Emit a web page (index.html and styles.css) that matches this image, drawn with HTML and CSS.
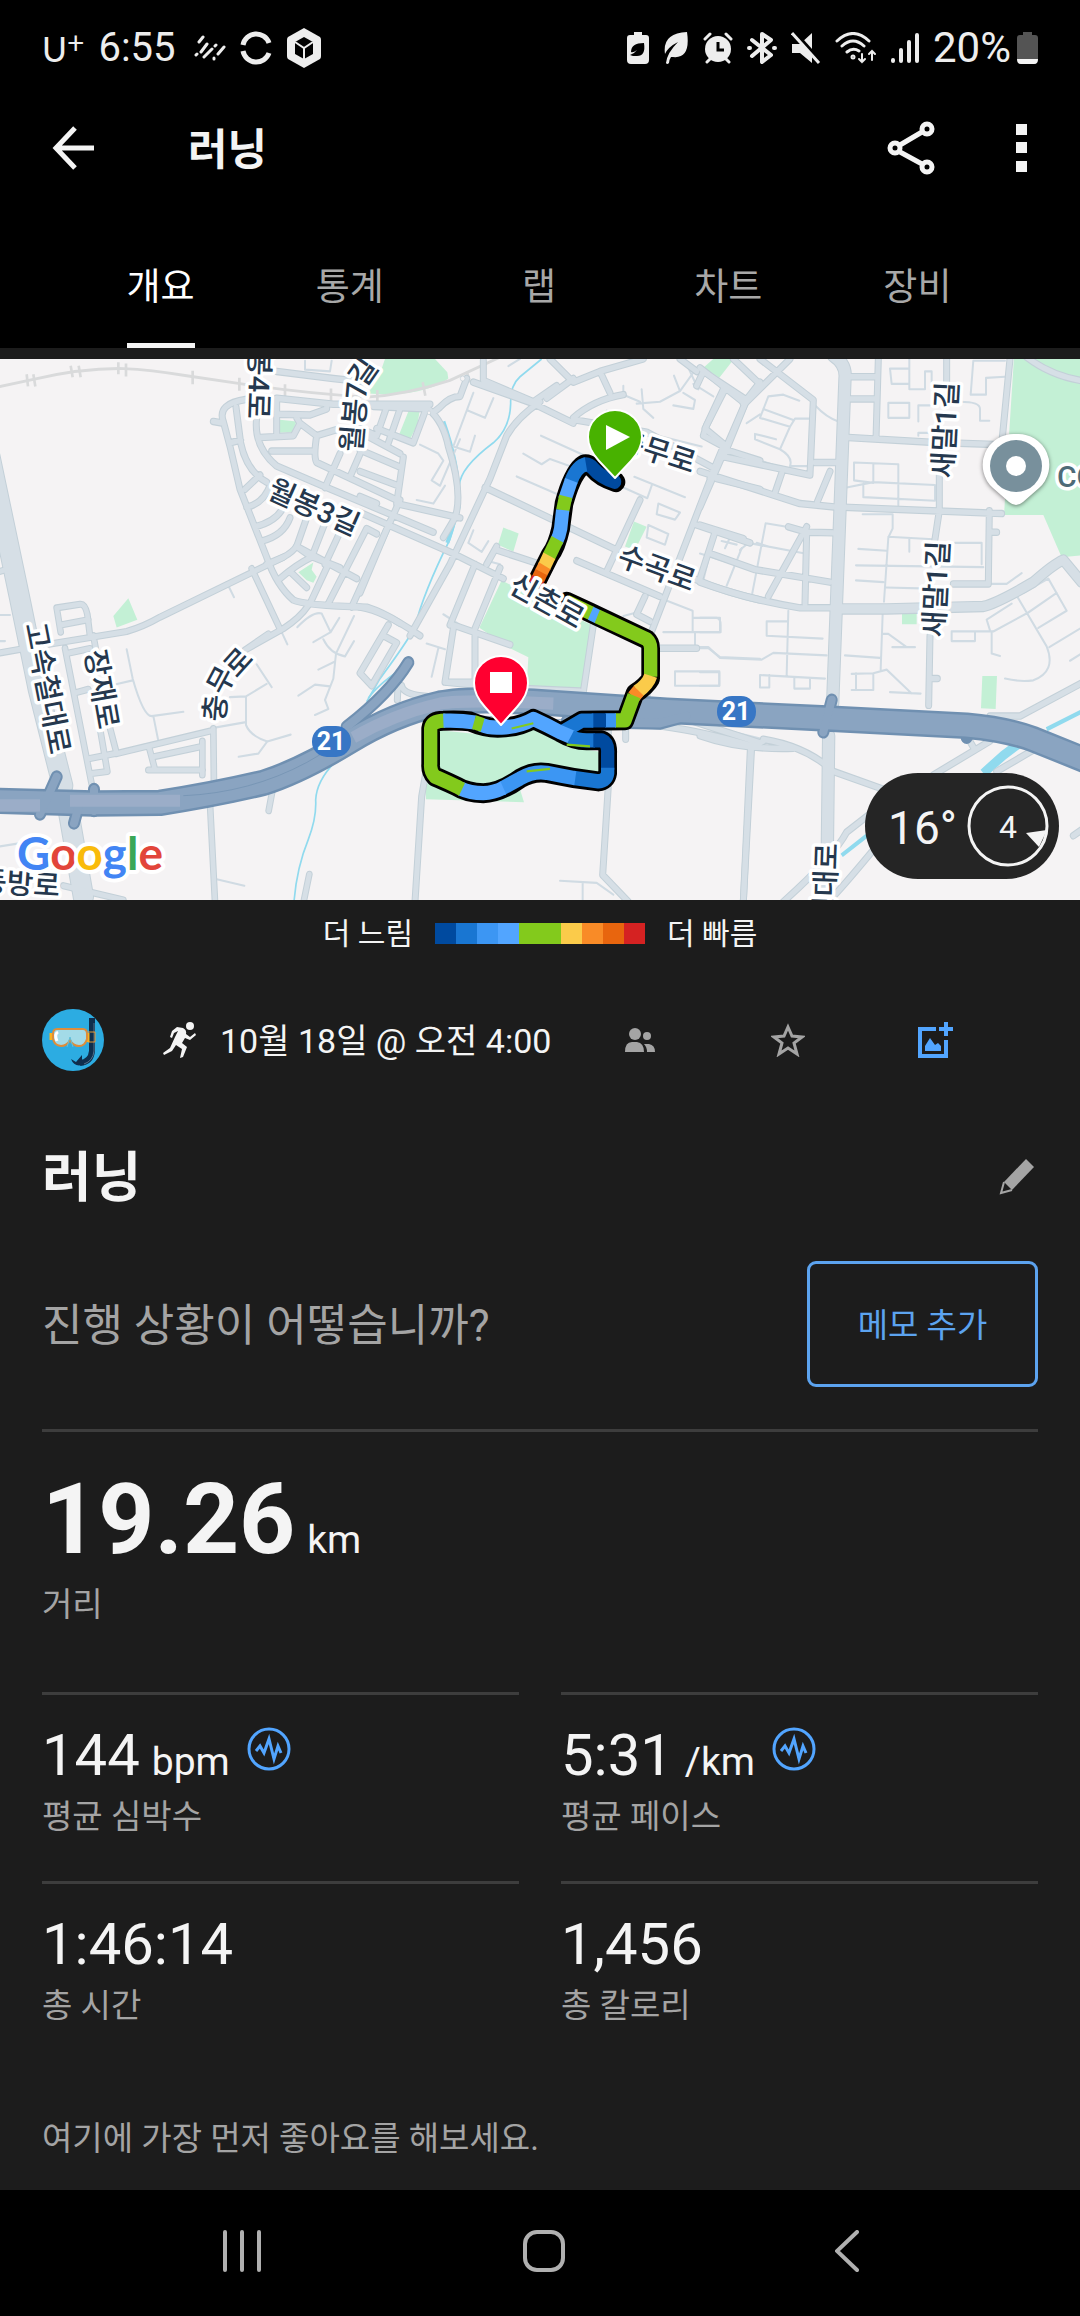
FILE: index.html
```html
<!DOCTYPE html>
<html lang="ko">
<head>
  <meta charset="UTF-8">
  <meta name="viewport" content="width=device-width, initial-scale=1.0">
  <title>러닝</title>
  <link rel="stylesheet" href="styles.css">
</head>
<body>
  <div class="status-bar">
    <div class="status-left">
      <span class="carrier">U<sup>+</sup></span>
      <span class="clock">6:55</span>
      <svg class="st-icon" width="32" height="28" viewBox="0 0 32 28" stroke="#ededed" stroke-width="3" stroke-linecap="round">
        <path d="M5 8L9 3M7 18L13 10M2 21L3 20M10 23L18 15M21 12L22 11M20 25L20 24M24 20L30 13"/>
      </svg>
      <svg class="st-icon" width="32" height="34" viewBox="0 0 32 34" fill="none" stroke="#ededed" stroke-width="5">
        <path d="M3 14A13.500 13.500 0 0 1 29 12M3 20A13.500 13.500 0 0 0 29 22"/>
      </svg>
      <svg class="st-icon" width="36" height="40" viewBox="0 0 36 40">
        <path d="M18 0L34 9Q35 10 35 12V28Q35 30 34 31L18 40L2 31Q1 30 1 28V12Q1 10 2 9Z" fill="#ededed"/>
        <path d="M18 9L27 14V26L18 31L9 26V14Z" fill="#000"/>
        <path d="M9 14L18 20L27 14M18 20V31" stroke="#ededed" stroke-width="2" fill="none"/>
      </svg>
    </div>
    <div class="status-right">
      <svg width="22" height="32" viewBox="0 0 22 32">
        <path d="M7 0H15V3H19Q22 3 22 6V28Q22 32 18 32H4Q0 32 0 28V6Q0 3 3 3H7Z" fill="#ededed"/>
        <path d="M17 11Q19 24 10 24H6L3 23Q8 21 10 18Q6 21 4 20Q4 11 17 11Z" fill="#000"/>
      </svg>
      <svg width="26" height="34" viewBox="0 0 26 34">
        <path d="M24 1Q28 28 10 26H8Q6 29 6 32Q4 34 3 32Q4 22 15 11Q5 16 2 23Q-1 2 24 1Z" fill="#ededed"/>
      </svg>
      <svg width="30" height="32" viewBox="0 0 30 32">
        <circle cx="15" cy="17" r="13" fill="#ededed"/>
        <path d="M2 7L7 2M28 7L23 2M4 30L7 27M26 30L23 27" stroke="#ededed" stroke-width="3" stroke-linecap="round"/>
        <path d="M15 10V18H21" stroke="#000" stroke-width="3" fill="none"/>
      </svg>
      <svg width="30" height="34" viewBox="0 0 30 34" fill="none" stroke="#ededed" stroke-width="4" stroke-linejoin="round" stroke-linecap="round">
        <path d="M5 9L24 24L15 31V3L24 9L5 25M2 17H3M27 17H28"/>
      </svg>
      <svg width="30" height="32" viewBox="0 0 30 32">
        <path d="M1 12H9L21 1V31L9 21H1Z" fill="#ededed"/>
        <path d="M4 1L31 31" stroke="#000" stroke-width="4"/>
        <path d="M1 1L28 31" stroke="#ededed" stroke-width="3"/>
      </svg>
      <svg width="42" height="32" viewBox="0 0 42 32" fill="none" stroke="#ededed" stroke-width="3" stroke-linecap="round">
        <path d="M2 9Q18 -6 34 9M7 14Q18 4 29 14M12 20Q18 15 24 19"/>
        <circle cx="18" cy="25" r="1"/>
        <path d="M27 22V30M24 27L27 30L30 27M37 28V19M34 22L37 19L40 22" stroke-width="2"/>
      </svg>
      <svg width="28" height="32" viewBox="0 0 28 32" stroke="#ededed" stroke-width="4" stroke-linecap="round">
        <path d="M2 28V29M10 18V29M18 10V29M26 3V29"/>
      </svg>
      <span class="percent">20%</span>
      <svg width="21" height="32" viewBox="0 0 21 32">
        <path d="M6 0H15V3H18Q21 3 21 6V28Q21 32 17 32H4Q0 32 0 28V6Q0 3 3 3H6Z" fill="#545454"/>
        <path d="M0 27H21Q21 32 17 32H4Q0 32 0 27Z" fill="#f4f4f4"/>
      </svg>
    </div>
  </div>

  <header class="app-bar">
    <button class="icon-btn" aria-label="뒤로">
      <svg width="42" height="44" viewBox="0 0 42 44" fill="none" stroke="#f4f4f4" stroke-width="5">
        <path d="M42 22H4M23 2L4 22L23 42"/>
      </svg>
    </button>
    <h1>러닝</h1>
    <button class="icon-btn share" aria-label="공유">
      <svg width="48" height="54" viewBox="0 0 48 54" fill="none" stroke="#f4f4f4" stroke-width="5">
        <path d="M13 24L35 11M13 31L35 43"/>
        <circle cx="8" cy="27" r="5"/><circle cx="40" cy="8" r="5"/><circle cx="40" cy="46" r="5"/>
      </svg>
    </button>
    <button class="icon-btn" aria-label="더보기">
      <svg width="12" height="48" viewBox="0 0 12 48" fill="#f4f4f4">
        <path d="M0 0H11V11H0ZM0 18H11V29H0ZM0 37H11V48H0Z"/>
      </svg>
    </button>
  </header>

  <nav class="tabs">
    <button class="tab active"><span>개요</span></button>
    <button class="tab"><span>통계</span></button>
    <button class="tab"><span>랩</span></button>
    <button class="tab"><span>차트</span></button>
    <button class="tab"><span>장비</span></button>
  </nav>

  <main>
    <section class="map">
      <svg class="map-canvas" viewBox="0 0 1080 541">
        <g transform="translate(0 -9) scale(.33333 .35714)">
          <!-- parks -->
          <g class="park">
            <path d="M840 195L890 200L875 230L835 232ZM340 745L385 695L412 755L350 777ZM895 622L940 595L935 615L950 635L940 652L920 645Z"/>
            <path transform="translate(1080 0)" d="M75 25H225L262 62L265 80Q215 118 90 125L25 122L50 80L62 60ZM148 165L180 165L172 210L150 250L118 235ZM430 497L476 514L460 565L414 545ZM822 480L860 495L825 560L795 550ZM425 645L540 700L695 770L660 962L500 948L505 860L450 835L358 778ZM195 1210L330 1100L470 1200L492 1266L198 1258ZM240 1065L400 1080L520 1050L620 1110L720 1125L720 1185L540 1165L400 1215L330 1212L240 1175ZM1030 50L1060 25H1122L1078 78Z"/>
            <path transform="translate(2100 0)" d="M942 20H1145V575L1085 580L1030 462H912ZM606 735L650 735L650 768L606 768ZM847 913H891L887 1005L843 1003Z"/>
          </g>
          <!-- streams -->
          <g class="water">
            <path d="M1200 895Q1130 940 1105 975M1020 1140Q950 1200 947 1260Q950 1310 925 1370Q890 1450 882 1545"/>
            <path transform="translate(1080 0)" d="M545 25L480 75Q450 100 452 150Q450 220 400 260Q300 330 298 380Q300 450 270 530Q190 680 165 775Q140 820 60 920L20 985"/>
            <path class="wide" transform="translate(1080 0)" d="M250 200Q300 330 296 440L262 540"/>
            <path class="wide" transform="translate(2100 0)" d="M1150 1010L1040 1062M500 1360L425 1415"/>
            <path class="broad" transform="translate(2100 0)" d="M960 1100L910 1135L850 1185"/>
          </g>
          <!-- railway -->
          <path class="rail" d="M-10 104L100 82Q250 50 370 52Q450 55 560 72L720 94Q900 120 1100 132Q1220 125 1350 85L1500 20"/>
          <path class="rail" d="M80 68L84 102M100 68L106 102M212 44L218 76M236 44L242 76M355 34V68M378 38V74M578 58V96M718 78V114M855 96V130M993 108V142M1132 112V146M1268 90L1276 128M1400 60L1410 90"/>

          <!-- lanes -->
          <g class="lane">
            <path d="M0 742H30M0 815H15M380 838L398 920Q430 1025 455 1025L550 1013M348 936L398 925M460 1025L474 1090M680 650L702 692M770 880L815 944M800 935L738 970V1050Q750 1080 802 1096L872 1077M690 972L738 970M640 1058L738 1042M802 1096L775 1130L716 1139M845 790L862 824M892 776Q940 730 965 738L992 790L940 818M1018 750L992 790M970 810Q990 850 1035 858L1062 815M1062 745L1008 850L1000 920L975 980L985 1005L945 1022M1005 872L955 895M990 942L945 937L895 968M915 30L915 55L990 60L995 30M650 1482L733 1500M0 1390L80 1378"/>
            <path transform="translate(1080 0)" d="M340 120L280 270L330 285L345 240M400 135L375 190L325 170M215 365L240 380L300 250M170 420L220 430L255 380M180 265L235 290L250 310L215 365M543 240L720 315M490 290L545 320L570 305L660 335M470 354L620 415M823 355L975 412M875 380L862 415L790 385M895 430L960 455L945 475L890 460ZM865 490L925 515L915 545L860 525ZM340 505L325 540L365 565L385 535M380 590L420 600M945 900H1078V940H945ZM998 750H1070Q1082 752 1082 770V790H998ZM915 700L998 730V790M790 745L830 735M910 790H1005V835M1005 835H1045L1080 860L1200 865M600 1486L710 1492L760 1525M668 1492V1540M790 100V125L840 145M845 110L850 165L880 190M740 170L790 200M830 150L900 145L960 115L942 72M1010 50L960 115M980 40L1015 110M970 120L1005 140L1000 165L940 155M1000 95L1060 130M850 230L1025 270M200 822L255 838M235 835L215 915M250 740L300 770M1015 490L1150 530M1085 535L1130 545M1110 525L1095 555M1165 540L1140 560M445 45L480 25M1200 180L1160 205"/>
            <path transform="translate(2100 0)" d="M298 142L250 125L205 130L180 190L270 215L240 278L165 250V235L228 250M270 215L285 192H330M190 165L278 195M240 278Q280 300 270 325H325M135 295L245 330M170 540L205 550M345 155Q380 190 415 200M570 52H628V95H575ZM628 25V110H675V60H695V110M565 148H628V190H565ZM655 200V155H690M780 145Q840 145 840 165V198H868M820 30L812 125H858V78L915 75M820 30H915M655 240V232H690M462 315L595 320V435M462 315V365L520 372V320M440 385L520 370L705 378V422L490 412V375M488 460H578V500L565 525L552 705M475 557L560 562M468 603L850 608M468 645L550 650M558 665L690 668M565 523L700 530M628 528V565M765 540H845V600M197 485L260 495M45 510L10 645M0 570L165 618L310 640M197 485L155 690M125 555L80 660M345 505L400 512M145 540L315 570M265 730L260 910M0 750H60V790H0M0 832H25L60 862L185 867L220 848L380 855M262 760H200V800L368 808M0 902H58V940H0M208 910V945H180V910L375 920M283 918V948H330V920M548 740L542 895M435 855L540 862M455 907L520 905V952H455M468 905V952M520 905L560 895L635 962M570 958L662 962M548 795L565 795L620 832M577 832H645M755 788H825V815H755ZM825 788H880L985 735L1070 680M945 680L1040 830Q1070 900 1000 925Q960 930 915 920M870 785L860 755L935 710M970 680L1045 640L1100 730L1015 778M1048 832L1140 780M875 790V850L900 857M1110 870L1145 850M875 655H920L965 625M0 1050Q60 1060 190 1090"/>
          </g>

          <!-- streets: the casing pass first, the fill pass over it -->
          <defs>
            <g id="streets">
              <path class="s4" d="M-30 300L58 690L115 950L188 1220M205 1290L250 1530"/>
              <path class="s2" d="M0 848L160 822L380 788Q430 775 480 748L850 580Q880 565 890 548M150 822L80 840M0 620L28 612M755 612L842 785M350 1130L640 1065M350 1130L325 1040M280 800L288 840M270 800L262 740Q255 710 240 712L170 722L182 790M182 770L265 755M195 835L275 1215M200 850L270 836M225 960L265 950M262 1145L345 1130M300 1060L322 1180L275 1186M448 1115L465 1175M445 1176H608M607 1095V1190M455 1140L605 1110M630 1270L645 1545M818 1230L806 1290M928 1468L912 1540M640 1060L642 1230M190 1500L370 1540M735 840L850 780Q900 750 925 715M735 840L805 795"/>
              <path class="s3" d="M670 200Q650 150 740 138M670 200L690 270L720 390L800 580Q830 660 880 700Q910 715 1100 720Q1150 735 1200 765M770 190Q760 270 830 325L980 385L1300 510M800 600L850 580M708 160L722 260Q740 340 800 370M830 60L1000 80L1100 90M830 135L1000 152H1290M830 135V240M640 200L670 205M690 260L722 252M735 390L780 350M740 440Q790 430 810 380M765 495Q830 480 850 440M785 535Q850 520 870 470M838 180L930 182L980 165V152M780 245L880 240L900 205L890 190M900 205L950 240L1020 220M950 240Q940 300 950 315L1190 420M815 283H940M975 385L1020 290M1050 355L1090 270M840 640Q890 600 935 580L985 460M870 620L920 665M935 580L890 550L920 470M975 600L1020 510M985 710L1100 500L1130 515M930 710L985 600M1055 720L1200 420M890 550L1070 640M940 580L1020 610M1160 160L1130 240L1080 220M1165 770L1080 905L1115 940L1190 820L1150 800M1280 160L1240 260L1130 220M1200 165L1165 260"/>
              <path class="s3" transform="translate(1080 0)" d="M40 158L205 165Q250 200 265 270Q310 400 285 470L250 525M340 90L520 150L640 205M320 80L300 130Q270 130 240 160L220 175M370 30V85L520 145L590 100M540 145Q470 190 440 240L390 360L270 600L150 800M570 25L640 90L720 60L850 25M640 80L560 135M720 60L750 120M640 190Q700 140 790 125M640 195L860 230L1060 330M375 385L770 560M130 300L110 430L300 470M0 230L120 290M0 280L125 330M0 340L115 380M0 455L280 570L430 640M0 720Q70 730 180 800M90 480L0 680M345 600L270 770M280 770L450 825M345 790V930M280 780L255 930H430M410 550L380 600M410 560L540 600M650 590L900 690M840 420L740 620M0 410L50 430M1060 340L870 800M700 770L668 970M890 835H1010M855 690L830 740L870 760M865 930L860 980M1010 100L1030 60L1160 140M1010 60L960 25M1090 110L1040 210L1030 240L1090 270L1050 360M1100 280L1200 310M1160 140L1090 300M1150 150L1200 90M1070 360L1200 390M1010 490L1170 540M1000 640Q1100 680 1200 700M420 610L345 780M125 940Q130 965 200 970M115 920L112 980M255 930L420 945L660 955M200 1170L185 1250L165 1545M745 1060V1220L728 1470L805 1545M797 1050V1090M1172 1100L1150 1545M1000 1040L1200 1100M870 1050Q1000 1060 1180 1110"/>
              <path class="s3" transform="translate(2100 0)" d="M0 50L135 150L70 290L0 440M75 110L15 220L80 270M135 150L270 25M100 25L185 100M180 25L340 140L330 350L75 300M345 315H420M245 345L225 400M0 340L300 430L410 440M390 340L352 425M450 75H525M450 137H525M535 25L528 250M445 245L690 258L905 265M740 25V90M930 25L905 265M430 440L905 458M868 450L865 655H760M868 510H890M718 350V450L700 560M690 800L686 995M690 920H712M320 495L205 690M325 510L400 512M320 510L315 710M0 650Q150 700 300 722H550M0 490L130 528M265 495L320 510M30 570L165 615L390 650M45 510L0 640M980 20Q1050 70 1140 85M155 1110L130 1545M0 1080Q120 1120 280 1115M190 1095L160 1110M190 1090Q320 1110 400 1180L550 1230M550 1270L440 1350Q400 1420 250 1545M520 1400Q440 1490 400 1530M870 1035V1095L700 1190M800 1080L825 1120M870 1025H960L1150 930M1000 1120L890 1180M1000 1110Q1070 1110 1150 1170M1120 1360L1150 1340"/>
              <path class="s35" transform="translate(2100 0)" d="M420 725H560L850 718Q890 710 1000 650Q1060 600 1090 588L1145 650"/>
              <path class="s38" transform="translate(2100 0)" d="M400 15Q440 40 435 80L398 990M386 1080L382 1400L370 1545"/>
            </g>
          </defs>
          <use href="#streets" class="casing"/>
          <use href="#streets" class="fill"/>
          <g transform="translate(1080 0)" class="circle">
            <circle cx="207" cy="176" r="5"/><circle cx="308" cy="80" r="7"/>
          </g>

          <!-- national road 21 -->
          <g class="highway edge">
            <path class="ramp" d="M1225 875Q1170 960 1040 1055"/>
            <path d="M-20 1262L280 1270L480 1268Q640 1245 790 1212Q900 1180 1050 1095Q1180 1020 1320 990Q1400 975 1600 985L2000 1010L2480 1032L2900 1052Q3020 1062 3100 1090L3260 1150"/>
            <path class="ramp" d="M170 1195L120 1300M282 1230V1290M240 1265L222 1325M2495 980L2470 1070M1700 1040L1980 1045L2060 1025M2900 1060V1085"/>
          </g>
          <g class="highway">
            <path class="ramp" d="M1225 875Q1170 960 1040 1055"/>
            <path d="M-20 1262L280 1270L480 1268Q640 1245 790 1212Q900 1180 1050 1095Q1180 1020 1320 990Q1400 975 1600 985L2000 1010L2480 1032L2900 1052Q3020 1062 3100 1090L3260 1150"/>
            <path class="ramp" d="M170 1195L120 1300M282 1230V1290M240 1265L222 1325M2495 980L2470 1070M1700 1040L1980 1045L2060 1025"/>
            <path class="light" d="M-20 1275H120M210 1262H540M1060 1085Q1180 1020 1320 990Q1400 978 1660 990"/>
            <path class="seam" d="M550 1248Q750 1240 920 1155L1040 1090M1440 1025L1800 1040"/>
          </g>

          <!-- recorded track, coloured by pace -->
          <g class="track" transform="translate(1080 0)">
            <g class="outline">
              <path d="M768 370Q720 355 700 332Q680 312 665 325Q635 350 612 430L602 500Q590 550 570 575L535 640"/>
              <path d="M620 705L690 735L860 810Q872 820 872 835V920Q860 940 825 962L795 1037L665 1038L610 1068"/>
              <path d="M425 1057Q480 1055 520 1033Q560 1050 600 1070Q640 1092 680 1093H725Q745 1100 743 1130V1185Q740 1205 715 1208Q640 1200 560 1184Q520 1178 480 1200Q420 1240 370 1241Q320 1240 290 1222Q240 1200 225 1195Q210 1180 212 1160V1060Q215 1038 250 1038Q300 1036 330 1040Q380 1060 425 1057Z"/>
            </g>
            <path stroke="#004a9f" stroke-linecap="round" d="M764 369Q720 355 700 332Q690 320 676 320"/>
            <path stroke="#1976d2" d="M678 320Q650 325 632 370"/>
            <path stroke="#52a5ff" d="M634 365L614 420"/>
            <path stroke="#83ca1c" d="M617 410L608 450"/>
            <path stroke="#52a5ff" d="M608 448L602 500Q598 520 590 535"/>
            <path stroke="#83ca1c" d="M592 530L566 580"/>
            <path stroke="#fbcb4a" d="M568 576L552 608"/>
            <path stroke="#f98b27" d="M554 604L543 624"/>
            <path stroke="#e8650e" d="M544 622L534 642"/>
            <path stroke="#d52222" d="M535 640L525 658"/>
            <path stroke="#83ca1c" d="M620 705L695 738"/>
            <path stroke="#52a5ff" d="M692 737L714 747"/>
            <path stroke="#83ca1c" d="M712 746L860 810Q872 820 872 835V915"/>
            <path stroke="#fbcb4a" d="M872 912Q865 935 832 957"/>
            <path stroke="#f98b27" d="M836 954L820 972"/>
            <path stroke="#83ca1c" d="M822 968L795 1037H765"/>
            <path stroke="#3c96f3" d="M768 1037H735"/>
            <path stroke="#004a9f" d="M738 1037H695"/>
            <path stroke="#1976d2" d="M700 1038H665L610 1068"/>
            <path stroke="#52a5ff" d="M362 1049Q390 1060 425 1057Q480 1055 520 1033Q560 1050 600 1070L640 1086"/>
            <path stroke="#1976d2" d="M632 1083Q650 1093 680 1093H705"/>
            <path stroke="#004a9f" d="M700 1093H725Q745 1100 743 1130V1175"/>
            <path stroke="#1976d2" d="M743 1170V1185Q740 1205 715 1208L640 1198"/>
            <path stroke="#3c96f3" d="M646 1199Q600 1192 560 1184Q520 1178 480 1200L425 1228"/>
            <path stroke="#52a5ff" d="M430 1226Q400 1240 370 1241Q330 1240 302 1228"/>
            <path stroke="#83ca1c" d="M306 1230L290 1222Q240 1200 225 1195Q210 1180 212 1160V1060Q215 1038 256 1038"/>
            <path stroke="#52a5ff" d="M250 1038Q300 1036 345 1043"/>
            <path stroke="#83ca1c" d="M342 1042L368 1050"/>
            <path stroke="#83ca1c" class="thin" d="M455 1060L520 1045M500 1180L570 1173M620 1105L690 1110"/>
          </g>
        </g>

        <!-- street names -->
        <g class="names">
          <text transform="translate(48 329) rotate(79)" dy=".36em">고속철대로</text>
          <text transform="translate(102 330) rotate(80)" dy=".36em">장재로</text>
          <text transform="translate(215 349) rotate(-85)" dy=".36em">충</text>
          <text transform="translate(221 321) rotate(-62)" dy=".36em">무</text>
          <text transform="translate(238 303) rotate(-48)" dy=".36em">로</text>
          <text transform="translate(314 148) rotate(24)" dy=".36em">월봉3길</text>
          <text transform="translate(258 60) rotate(92)" dy=".36em" class="end">월봉4로</text>
          <text transform="translate(354 58) rotate(-85)" dy=".36em">월봉7</text>
          <text transform="translate(363 13) rotate(-55)" dy=".36em">길</text>
          <text transform="translate(657 92) rotate(18)" dy=".36em">충무로</text>
          <text transform="translate(657 209) rotate(20)" dy=".36em">수곡로</text>
          <text transform="translate(547 242) rotate(29)" dy=".36em">신촌로</text>
          <text transform="translate(945 71) rotate(-87)" dy=".36em">새말1길</text>
          <text transform="translate(936 230) rotate(-87)" dy=".36em">새말1길</text>
          <text transform="translate(827 484) rotate(-88)" dy=".36em" class="end">번영대로</text>
          <text transform="translate(60 527) rotate(4)" dy=".36em" class="end">동방로</text>
          <text x="1057" y="128" class="place">CG</text>
        </g>

        <g class="shield">
          <rect x="312" y="367" width="39" height="31" rx="15"/><text x="331" y="391">21</text>
          <rect x="717" y="337" width="39" height="31" rx="15"/><text x="736" y="361">21</text>
        </g>

        <text class="google" x="17" y="511"><tspan fill="#4285f4">G</tspan><tspan fill="#e2453a">o</tspan><tspan fill="#f9bb0b">o</tspan><tspan fill="#4285f4">g</tspan><tspan fill="#3aa757">l</tspan><tspan fill="#e2453a">e</tspan></text>

        <!-- place pin -->
        <path class="place-pin" d="M1016 75A31 31 0 0 1 1039 129L1023 143Q1016 149 1009 143L993 129A31 31 0 0 1 1016 75Z"/>
        <circle cx="1016" cy="107" r="26" fill="#78909c"/>
        <circle cx="1016" cy="107" r="10" fill="#fff"/>
        <!-- start and stop pins -->
        <path class="pin" fill="#48b200" d="M615 51A27 27 0 0 1 642 78Q642 90 631 102L615 119L599 102Q588 90 588 78A27 27 0 0 1 615 51Z"/>
        <path d="M606 66V91L630 78Z" fill="#fff"/>
        <path class="pin" fill="#ff0030" d="M501 297A27 27 0 0 1 528 324Q528 336 517 348L501 366L485 348Q474 336 474 324A27 27 0 0 1 501 297Z"/>
        <path d="M490 313H512V334H490Z" fill="#fff"/>
      </svg>
      <div class="weather">
        <span>16°</span>
        <svg width="82" height="82" viewBox="0 0 82 82">
          <circle cx="41" cy="41" r="39" fill="none" stroke="#f4f4f4" stroke-width="3"/>
          <path d="M59 48L80 45L72 62Z" fill="#f4f4f4"/>
          <text x="41" y="53">4</text>
        </svg>
      </div>
    </section>

    <div class="legend">
      <span>더 느림</span>
      <div class="legend-bar">
        <i class="p1"></i><i class="p2"></i><i class="p3"></i><i class="p4"></i><i class="p5"></i><i class="p5"></i><i class="p6"></i><i class="p7"></i><i class="p8"></i><i class="p9"></i>
      </div>
      <span>더 빠름</span>
    </div>

    <div class="content">
      <div class="meta">
        <svg class="avatar" width="62" height="62" viewBox="0 0 62 62">
          <circle cx="31" cy="31" r="31" fill="#2cace2"/>
          <path d="M50 9V42Q49 53 38 54" fill="none" stroke="#0f2e4d" stroke-width="6"/>
          <path d="M52 14V42Q51 52 42 55" fill="none" stroke="#53718c" stroke-width="1"/>
          <path d="M29 50L34 53L40 46V56Q32 58 29 50Z" fill="#0f2e4d"/>
          <path d="M46 23H53V33H46" fill="none" stroke="#e59a3a" stroke-width="1"/>
          <path d="M9 24V31M46 24V33" stroke="#f9b21e" stroke-width="3"/>
          <path d="M15 20H41Q45 20 45 25V30Q43 37 37 37Q31 37 28 31Q25 37 19 37Q11 36 11 28V25Q11 20 15 20Z" fill="#a3dbe8" stroke="#dd8d3b" stroke-width="2"/>
          <path d="M16 23Q12 25 15 32" stroke="#fff" stroke-width="3" fill="none"/>
          <path d="M25 38L28 28L31 38" stroke="#5fc0de" stroke-width="1" fill="none"/>
        </svg>
        <svg class="runner" width="34" height="36" viewBox="0 0 34 36">
          <circle cx="27" cy="4" r="4" fill="#f4f4f4"/>
          <path d="M9 9L14 5L20 6Q24 8 23 12L27 15L32 11L33 13L27 18L22 16L19 21L24 25L20 35L17 36L19 27L13 23L9 29L1 33L0 31L7 26L12 15L15 9L11 11L9 16L7 15Z" fill="#f4f4f4"/>
        </svg>
        <span class="date">10월 18일 @ 오전 4:00</span>
        <div class="meta-actions">
          <button class="icon-btn" aria-label="공개 범위">
            <svg width="30" height="24" viewBox="0 0 30 24" fill="#a4a4a4">
              <circle cx="10" cy="6" r="6"/><circle cx="22" cy="8" r="4"/>
              <path d="M0 24Q0 14 7 14H12Q19 15 19 24ZM19 16H24Q30 17 30 24H22Q22 19 19 16Z"/>
            </svg>
          </button>
          <button class="icon-btn" aria-label="즐겨찾기">
            <svg width="34" height="34" viewBox="0 0 34 34" fill="none" stroke="#a4a4a4" stroke-width="3">
              <path d="M17 4L21 13L31 14L23 20L26 31L17 25L8 31L11 20L3 14L13 13Z"/>
            </svg>
          </button>
          <button class="icon-btn" aria-label="사진 추가">
            <svg width="36" height="36" viewBox="0 0 36 36" fill="#52a5ff">
              <path d="M0 5H18V9H4V32H26V18H30V36H0ZM26 0H30V5H35V9H30V14H26V9H21V5H26ZM7 24L12 16L17 23L20 21L23 24V29H7Z"/>
            </svg>
          </button>
        </div>
      </div>

      <div class="title-row">
        <h2>러닝</h2>
        <button class="icon-btn edit" aria-label="이름 편집">
          <svg width="36" height="36" viewBox="0 0 36 36">
            <path d="M27 0L35 8L13 31L5 23Z" fill="#a4a4a4"/>
            <path d="M5 23L2 34L13 31" fill="none" stroke="#a4a4a4" stroke-width="2"/>
          </svg>
        </button>
      </div>

      <div class="note-row">
        <p>진행 상황이 어떻습니까?</p>
        <button class="note-btn">메모 추가</button>
      </div>

      <div class="distance">
        <div class="big">19.26<small>km</small></div>
        <div class="label">거리</div>
      </div>

      <div class="stats">
        <div class="stat">
          <div class="value">144<small>bpm</small>
            <svg class="pulse" width="44" height="44" viewBox="0 0 44 44"><circle cx="22" cy="22" r="20"/><path d="M9 24L13 19L17 26L22 12L27 32L31 19L34 26"/></svg>
          </div>
          <div class="label">평균 심박수</div>
        </div>
        <div class="stat">
          <div class="value">5:31<small>/km</small>
            <svg class="pulse" width="44" height="44" viewBox="0 0 44 44"><circle cx="22" cy="22" r="20"/><path d="M9 24L13 19L17 26L22 12L27 32L31 19L34 26"/></svg>
          </div>
          <div class="label">평균 페이스</div>
        </div>
        <div class="stat">
          <div class="value">1:46:14</div>
          <div class="label">총 시간</div>
        </div>
        <div class="stat">
          <div class="value">1,456</div>
          <div class="label">총 칼로리</div>
        </div>
      </div>

      <p class="likes">여기에 가장 먼저 좋아요를 해보세요.</p>
    </div>
  </main>

  <footer class="nav-bar">
    <button class="icon-btn" aria-label="최근 앱">
      <svg width="38" height="42" viewBox="0 0 38 42" stroke="#b0b0b0" stroke-width="4" stroke-linecap="round"><path d="M2 2V40M19 2V40M36 2V40"/></svg>
    </button>
    <button class="icon-btn" aria-label="홈">
      <svg width="42" height="42" viewBox="0 0 42 42" fill="none" stroke="#b0b0b0" stroke-width="4"><rect x="2" y="2" width="38" height="38" rx="12"/></svg>
    </button>
    <button class="icon-btn" aria-label="이전">
      <svg width="24" height="42" viewBox="0 0 24 42" fill="none" stroke="#b0b0b0" stroke-width="4" stroke-linecap="round"><path d="M22 2L2 21L22 40"/></svg>
    </button>
  </footer>
</body>
</html>
```
FILE: styles.css
```css
* {
  box-sizing: border-box;
}
body {
  margin: 0;
  min-height: 100vh;
  display: flex;
  flex-direction: column;
  background: #1c1c1c;
  color: #f4f4f4;
  font-family: Roboto, "Noto Sans CJK KR", sans-serif;
}
h1, h2, p {
  margin: 0;
}
svg {
  display: block;
  flex: none;
}
button {
  margin: 0;
  padding: 0;
  border: none;
  background: none;
  color: inherit;
  font: inherit;
}
.icon-btn {
  display: flex;
  align-items: center;
  justify-content: center;
}

/* status bar */
.status-bar {
  background: #000;
  height: 96px;
  padding: 0 42px;
  display: flex;
  justify-content: space-between;
  align-items: center;
  color: #ededed;
}
.status-left, .status-right {
  display: flex;
  align-items: center;
}
.status-left {
  gap: 14px;
}
.status-right {
  gap: 14px;
}
.carrier {
  font-family: Lato, sans-serif;
  font-size: 34px;
  line-height: 40px;
}
.carrier sup {
  font-size: 30px;
  line-height: 1;
  vertical-align: 8px;
}
.clock {
  margin-right: 4px;
  font-size: 40px;
  line-height: 40px;
}
.percent {
  margin-right: -8px;
  font-size: 42px;
  line-height: 40px;
}

/* app bar */
.app-bar {
  background: #000;
  height: 104px;
  padding: 0 52px;
  display: flex;
  align-items: center;
}
.app-bar h1 {
  flex: 1;
  margin-left: 94px;
  padding-top: 4px;
  font-size: 43px;
  font-weight: 600;
  line-height: 48px;
}
.share {
  margin-right: 81px;
}

/* tabs */
.tabs {
  background: #000;
  height: 148px;
  padding: 0 68px 0 66px;
  display: flex;
}
.tab {
  flex: 1;
  display: flex;
  justify-content: center;
  color: #a8a8a8;
  font-size: 37px;
  line-height: 48px;
}
.tab span {
  height: 100%;
  padding-top: 64px;
}
.tab.active {
  color: #fff;
}
.tab.active span {
  border-bottom: 5px solid #f4f4f4;
}

/* map */
main {
  flex: 1;
}
.map {
  position: relative;
  margin-top: 11px;
  background: #f5f3f4;
  overflow: hidden;
}
.map-canvas {
  width: 100%;
  height: auto;
}
.map-canvas path {
  stroke-linejoin: round;
}
.park {
  fill: #c3f0d5;
}
.water {
  fill: none;
  stroke: #90daee;
  stroke-width: 5;
}
.water .wide {
  stroke-width: 12;
}
.water .broad {
  stroke-width: 26;
}
.rail {
  fill: none;
  stroke: #d9dadb;
  stroke-width: 8;
}
.lane {
  fill: none;
  stroke: #d0dbe3;
  stroke-width: 6;
  stroke-linecap: round;
}
.casing {
  --extra: 6px;
  stroke: #c3d0d8;
}
.fill {
  --extra: 0px;
  stroke: #d6dfe6;
}
#streets {
  fill: none;
  stroke-linecap: round;
}
.s2 { stroke-width: calc(14px + var(--extra)); }
.s3 { stroke-width: calc(15px + var(--extra)); }
.s35 { stroke-width: calc(26px + var(--extra)); }
.s38 { stroke-width: calc(34px + var(--extra)); }
.s4 { stroke-width: calc(58px + var(--extra)); }
.circle {
  fill: #f5f3f4;
  stroke: #c3d0d8;
  stroke-width: 2;
}
.highway {
  fill: none;
  stroke: #8aa4c1;
  stroke-width: 60;
}
.highway .ramp {
  stroke-width: 24;
  stroke-linecap: round;
}
.highway.edge {
  stroke: #7090b1;
  stroke-width: 74;
}
.highway.edge .ramp {
  stroke-width: 36;
}
.highway .light {
  stroke: #9badc8;
  stroke-width: 34;
}
.highway .seam {
  stroke: #7090b1;
  stroke-width: 2;
}
.track {
  fill: none;
  stroke-width: 40;
}
.track .outline {
  stroke: #000;
  stroke-width: 56;
  stroke-linecap: round;
}
.track .thin {
  stroke-width: 6;
}
.names text {
  fill: #25384e;
  stroke: #fff;
  stroke-width: 7px;
  stroke-linejoin: round;
  paint-order: stroke;
  font-size: 29px;
  font-weight: 500;
  text-anchor: middle;
}
.names .end {
  text-anchor: end;
}
.names .place {
  fill: #4e6b78;
  font-size: 30px;
  text-anchor: start;
}
.shield {
  fill: #3776c5;
}
.shield text {
  fill: #fff;
  font-size: 25px;
  font-weight: 700;
  text-anchor: middle;
}
.google {
  font-family: Lato, sans-serif;
  font-size: 46px;
  font-weight: 700;
  stroke: #fff;
  stroke-width: 8px;
  stroke-linejoin: round;
  paint-order: stroke;
}
.place-pin {
  fill: #fff;
  filter: drop-shadow(0 1px 2px rgba(0, 0, 0, .5));
}
.pin {
  stroke: #fff;
  stroke-width: 2;
}
.weather {
  position: absolute;
  right: 21px;
  bottom: 21px;
  height: 106px;
  padding: 0 10px 0 23px;
  border-radius: 53px;
  background: #252525;
  display: flex;
  align-items: center;
  gap: 10px;
  font-size: 46px;
}
.weather span {
  padding-top: 3px;
}
.weather text {
  fill: #f4f4f4;
  font-size: 32px;
  text-anchor: middle;
}

/* pace legend */
.legend {
  display: flex;
  justify-content: center;
  align-items: center;
  gap: 22px;
  height: 66px;
  font-size: 30px;
  line-height: 36px;
}
.legend span {
  padding-top: 2px;
}
.legend-bar {
  display: flex;
}
.legend-bar i {
  width: 21px;
  height: 21px;
}
.p1 { background: #004a9f; }
.p2 { background: #1976d2; }
.p3 { background: #3c96f3; }
.p4 { background: #52a5ff; }
.p5 { background: #83ca1c; }
.p6 { background: #fbcb4a; }
.p7 { background: #f98b27; }
.p8 { background: #e8650e; }
.p9 { background: #d52222; }

/* activity details */
.content {
  padding: 0 42px;
}
.meta {
  display: flex;
  align-items: center;
  height: 148px;
}
.runner {
  margin: 0 23px 0 59px;
}
.date {
  padding-top: 1px;
  font-size: 34px;
  line-height: 40px;
}
.meta-actions {
  margin-left: auto;
  margin-right: 28px;
  display: grid;
  grid-template-columns: repeat(3, 148px);
}
.title-row {
  display: flex;
  justify-content: space-between;
  align-items: center;
  height: 126px;
}
.title-row h2 {
  padding-top: 3px;
  font-size: 54px;
  font-weight: 600;
  line-height: 64px;
}
.edit {
  margin-right: 3px;
}
.note-row {
  display: flex;
  justify-content: space-between;
  align-items: center;
  padding: 21px 0 42px;
  color: #a4a4a4;
  font-size: 44px;
  line-height: 52px;
}
.note-row p {
  padding-top: 4px;
}
.note-btn {
  width: 231px;
  height: 126px;
  padding-top: 3px;
  border: 3px solid #5ca3ef;
  border-radius: 9px;
  color: #5ca3ef;
  font-size: 33px;
}
.distance {
  border-top: 3px solid #3d3d3d;
  height: 263px;
  padding-top: 32px;
}
.big, .value {
  display: flex;
  align-items: baseline;
  gap: 12px;
}
.big {
  font-size: 98px;
  font-weight: 700;
  line-height: 112px;
}
.value {
  font-size: 58px;
  line-height: 68px;
}
.big small, .value small {
  font-size: 39px;
  font-weight: 400;
  line-height: 40px;
}
.label {
  color: #a4a4a4;
  font-size: 33px;
  line-height: 40px;
}
.distance .label {
  margin-top: 9px;
}
.stats {
  display: grid;
  grid-template-columns: 1fr 1fr;
  column-gap: 42px;
}
.stat {
  border-top: 3px solid #3d3d3d;
  height: 189px;
  padding-top: 26px;
}
.pulse {
  align-self: flex-start;
  margin: 6px 0 0 5px;
  fill: none;
  stroke: #52a5ff;
  stroke-width: 3;
}
.stat .label {
  margin-top: 8px;
}
.likes {
  margin: 49px 0 29px;
  color: #a4a4a4;
  font-size: 33px;
  line-height: 40px;
}

/* system navigation */
.nav-bar {
  background: #000;
  height: 126px;
  padding: 0 82px 4px 91px;
  display: grid;
  grid-template-columns: repeat(3, 1fr);
}
```
